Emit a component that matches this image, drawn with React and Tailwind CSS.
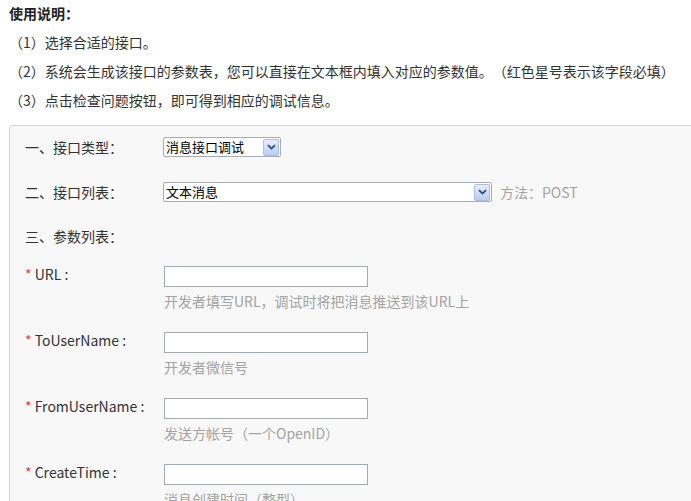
import React from "react"

const font = { fontFamily: '"Noto Sans CJK SC", "Noto Sans", sans-serif' }

function Arrow() {
  return (
    <span className="flex h-[17px] w-[16px] items-center justify-center rounded-[2px] border border-[#a9bfe3] bg-gradient-to-b from-[#e6eefb] to-[#b9cdef]">
      <svg width="9" height="6" viewBox="0 0 9 6">
        <path d="M1 1.2 L4.5 4.6 L8 1.2" fill="none" stroke="#2c4a86" strokeWidth="1.8" />
      </svg>
    </span>
  )
}

function FakeSelect({ text, w }) {
  return (
    <div className={`flex h-[20px] ${w} items-center justify-between rounded-[2px] border border-[#a5acb2] bg-white pl-[2px] pr-[1px] text-[13px] text-black`}>
      <span className="leading-[18px]">{text}</span>
      <Arrow />
    </div>
  )
}

function Param({ name, hint }) {
  return (
    <div className="mb-[21px] flex">
      <div className="w-[139px] text-[14px] leading-[17px] text-[#333]">
        <span className="text-[#e4393c]">*</span> {name} :
      </div>
      <div className="flex flex-col">
        <div className="h-[21px] w-[204px] border border-[#9fabb7] bg-white"></div>
        <div className="mt-[4px] h-[20px] whitespace-nowrap text-[14px] leading-[20px] text-[#a3a3a3]">{hint}</div>
      </div>
    </div>
  )
}

export default function App() {
  const params = [
    { name: "URL", hint: "开发者填写URL，调试时将把消息推送到该URL上" },
    { name: "ToUserName", hint: "开发者微信号" },
    { name: "FromUserName", hint: "发送方帐号（一个OpenID）" },
    { name: "CreateTime", hint: "消息创建时间（整型）" },
  ]
  return (
    <div className="h-[501px] w-[691px] overflow-hidden bg-white text-[14px] text-[#333] [text-spacing-trim:space-all]" style={font}>
      <div className="h-[28px] pl-[9px] font-bold leading-[26px] text-[#222]">使用说明：</div>
      <div className="h-[29px] pl-[9px] leading-[29px]">（1）选择合适的接口。</div>
      <div className="h-[29px] whitespace-nowrap pl-[9px] leading-[29px]">（2）系统会生成该接口的参数表，您可以直接在文本框内填入对应的参数值。（红色星号表示该字段必填）</div>
      <div className="h-[29px] pl-[9px] leading-[29px]">（3）点击检查问题按钮，即可得到相应的调试信息。</div>
      <div className="ml-[9px] mt-[10px] h-[400px] rounded-tl-[4px] border-l border-t border-[#d4d4d4] bg-[#f8f8f8] pl-[15px] pt-[11px]">
        <div className="flex h-[20px] items-center">
          <div className="w-[138px] leading-[20px]">一、接口类型：</div>
          <FakeSelect text="消息接口调试" w="w-[118px]" />
        </div>
        <div className="mt-[25px] flex h-[20px] items-center">
          <div className="w-[138px] leading-[20px]">二、接口列表：</div>
          <FakeSelect text="文本消息" w="w-[329px]" />
          <span className="ml-[8px] text-[#a3a3a3]">方法：POST</span>
        </div>
        <div className="mt-[24px] h-[20px] leading-[20px]">三、参数列表：</div>
        <div className="mt-[20px]">
          {params.map((p) => (
            <Param key={p.name} name={p.name} hint={p.hint} />
          ))}
        </div>
      </div>
    </div>
  )
}
